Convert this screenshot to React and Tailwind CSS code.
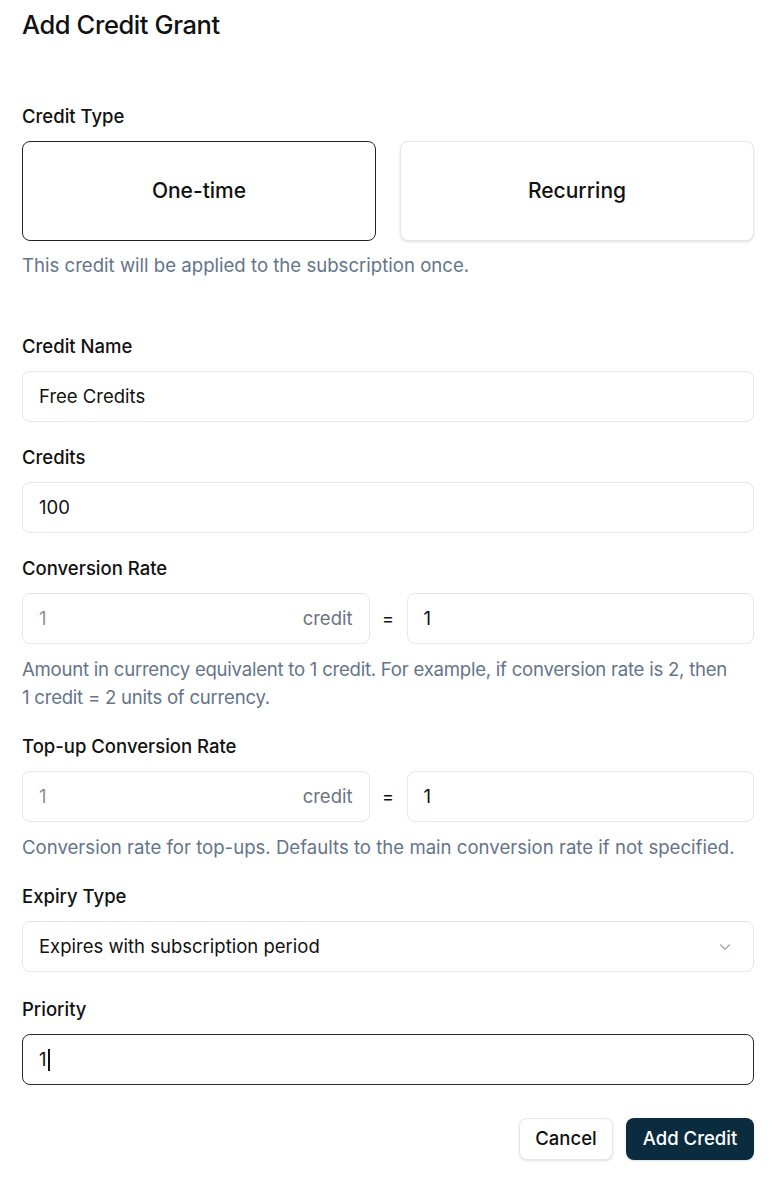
import { ChevronDown } from 'lucide-react'

const font = { fontFamily: 'Inter, "Noto Sans", sans-serif' }

const Label = ({ children, className = '' }) => (
  <div className={`h-6 text-[18.5px] font-medium leading-6 text-[#111] ${className}`}>{children}</div>
)

const Help = ({ children, className = '' }) => (
  <p className={`text-[18.6px] leading-7 text-[#64748b] ${className}`}>{children}</p>
)

const Field = ({ children, className = '', border = 'border border-[#e8e8ea]' }) => (
  <div className={`flex h-[51px] items-center rounded-lg bg-white px-4 text-[18.5px] text-[#111] ${border} ${className}`}>
    {children}
  </div>
)

const RateRow = () => (
  <div className="mt-[13px] flex items-center">
    <Field className="flex-1 justify-between">
      <span className="text-[#8a8f98]">1</span>
      <span className="text-[#6b7280]">credit</span>
    </Field>
    <span className="w-[37px] text-center text-[18px] text-[#111]">=</span>
    <Field className="flex-1">
      <span>1</span>
    </Field>
  </div>
)

export default function App() {
  return (
    <div className="min-h-[1184px] bg-white pl-[22px] pr-[18px] pt-[9px] text-[#111]" style={font}>
      <h1 className="h-8 text-[25.5px] font-medium leading-8 tracking-[-0.4px]">Add Credit Grant</h1>

      <Label className="mt-[63px]">Credit Type</Label>
      <div className="mt-[13px] grid grid-cols-2 gap-6">
        <button className="h-[100px] rounded-lg border-[1.5px] border-[#1f2430] bg-white text-[21px] font-medium">
          One-time
        </button>
        <button className="h-[100px] rounded-lg border border-[#e5e7eb] bg-white text-[21px] font-medium shadow-sm">
          Recurring
        </button>
      </div>
      <Help className="mt-[10px]">This credit will be applied to the subscription once.</Help>

      <Label className="mt-[55px]">Credit Name</Label>
      <Field className="mt-[13px]">Free Credits</Field>

      <Label className="mt-[23px]">Credits</Label>
      <Field className="mt-[13px]">100</Field>

      <Label className="mt-[23px]">Conversion Rate</Label>
      <RateRow />
      <Help className="mt-[11px] tracking-[-0.25px]">
        Amount in currency equivalent to 1 credit. For example, if conversion rate is 2, then 1{'\u00a0'}credit = 2
        units of currency.
      </Help>

      <Label className="mt-[23px]">Top-up Conversion Rate</Label>
      <RateRow />
      <Help className="mt-[11px]">
        Conversion rate for top-ups. Defaults to the main conversion rate if not specified.
      </Help>

      <Label className="mt-[23px]">Expiry Type</Label>
      <Field className="mt-[13px] justify-between">
        <span>Expires with subscription period</span>
        <ChevronDown className="mr-[3px] h-[18px] w-[18px] text-[#9ca3af]" strokeWidth={1.5} />
      </Field>

      <Label className="mt-[25px]">Priority</Label>
      <Field className="mt-[13px]" border="border-[1.5px] border-[#2b2b2b]">
        <span>1</span>
        <span className="ml-px h-[22px] w-[2px] bg-[#111]" />
      </Field>

      <div className="mt-[33px] flex justify-end gap-[13px]">
        <button className="h-[42px] w-[94px] rounded-lg border border-[#e5e7eb] bg-white text-[18.5px] font-medium shadow-sm">
          Cancel
        </button>
        <button className="h-[42px] w-[128px] rounded-lg bg-[#0b2b3f] text-[18.5px] font-medium text-white shadow-sm">
          Add Credit
        </button>
      </div>
    </div>
  )
}
